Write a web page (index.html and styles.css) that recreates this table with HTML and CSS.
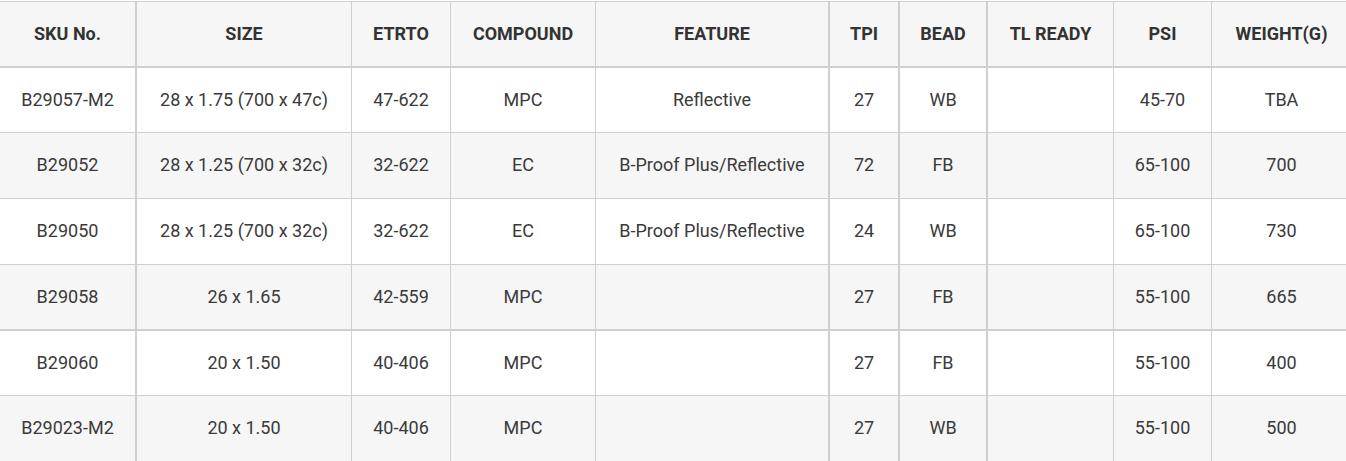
FILE: index.html
```html
<!DOCTYPE html>
<html>
<head>
<meta charset="utf-8">
<link rel="stylesheet" href="styles.css">
</head>
<body>
<table class="spec">
  <thead>
    <tr class="head">
      <th class="c1">SKU No.</th>
      <th class="c2">SIZE</th>
      <th class="c3">ETRTO</th>
      <th class="c4">COMPOUND</th>
      <th class="c5">FEATURE</th>
      <th class="c6">TPI</th>
      <th class="c7">BEAD</th>
      <th class="c8">TL READY</th>
      <th class="c9">PSI</th>
      <th class="c10">WEIGHT(G)</th>
    </tr>
  </thead>
  <tbody>
    <tr class="r1">
      <td class="c1">B29057-M2</td><td class="c2">28 x 1.75 (700 x 47c)</td><td class="c3">47-622</td><td class="c4">MPC</td><td class="c5">Reflective</td><td class="c6">27</td><td class="c7">WB</td><td class="c8"></td><td class="c9">45-70</td><td class="c10">TBA</td>
    </tr>
    <tr class="r2 alt">
      <td class="c1">B29052</td><td class="c2">28 x 1.25 (700 x 32c)</td><td class="c3">32-622</td><td class="c4">EC</td><td class="c5">B-Proof Plus/Reflective</td><td class="c6">72</td><td class="c7">FB</td><td class="c8"></td><td class="c9">65-100</td><td class="c10">700</td>
    </tr>
    <tr class="r3">
      <td class="c1">B29050</td><td class="c2">28 x 1.25 (700 x 32c)</td><td class="c3">32-622</td><td class="c4">EC</td><td class="c5">B-Proof Plus/Reflective</td><td class="c6">24</td><td class="c7">WB</td><td class="c8"></td><td class="c9">65-100</td><td class="c10">730</td>
    </tr>
    <tr class="r4 alt">
      <td class="c1">B29058</td><td class="c2">26 x 1.65</td><td class="c3">42-559</td><td class="c4">MPC</td><td class="c5"></td><td class="c6">27</td><td class="c7">FB</td><td class="c8"></td><td class="c9">55-100</td><td class="c10">665</td>
    </tr>
    <tr class="r5">
      <td class="c1">B29060</td><td class="c2">20 x 1.50</td><td class="c3">40-406</td><td class="c4">MPC</td><td class="c5"></td><td class="c6">27</td><td class="c7">FB</td><td class="c8"></td><td class="c9">55-100</td><td class="c10">400</td>
    </tr>
    <tr class="r6 alt">
      <td class="c1">B29023-M2</td><td class="c2">20 x 1.50</td><td class="c3">40-406</td><td class="c4">MPC</td><td class="c5"></td><td class="c6">27</td><td class="c7">WB</td><td class="c8"></td><td class="c9">55-100</td><td class="c10">500</td>
    </tr>
  </tbody>
</table>
</body>
</html>
```

FILE: styles.css
```css
html, body {
  margin: 0;
  padding: 0;
  background: #ffffff;
  overflow: hidden;
}

.spec {
  margin-top: 1px;
  border-collapse: separate;
  border-spacing: 0;
  table-layout: fixed;
  width: 1352px;
  font-family: Roboto, "Liberation Sans", sans-serif;
  font-size: 18px;
  color: #3a3a3a;
}

.spec th,
.spec td {
  box-sizing: border-box;
  padding: 0 4px 2px;
  text-align: center;
  vertical-align: middle;
  white-space: nowrap;
  border-right: 1px solid #cfcfcf;
  border-bottom: 1px solid #cfcfcf;
}

.spec th {
  font-weight: 700;
  color: #333333;
  background: #f6f6f6;
  border-top: 1px solid #cfcfcf;
  border-bottom-width: 2px;
  height: 67px;
  padding-bottom: 1px;
}

.spec .c1 { width: 137px; border-right-width: 2px; }
.spec .c2 { width: 215px; }
.spec .c3 { width: 99px; }
.spec .c4 { width: 145px; }
.spec .c5 { width: 234px; border-right-width: 2px; }
.spec .c6 { width: 70px; border-right-width: 2px; }
.spec .c7 { width: 88px; border-right-width: 2px; }
.spec .c8 { width: 126px; }
.spec .c9 { width: 98px; }
.spec .c10 { width: 140px; }

.spec tbody tr.alt td { background: #f6f6f6; }

.spec .r1 td { height: 65px; }
.spec .r2 td { height: 66px; }
.spec .r3 td { height: 66px; }
.spec .r4 td { height: 66px; border-bottom-width: 2px; }
.spec .r5 td { height: 65px; }
.spec .r6 td { height: 66px; }
```
